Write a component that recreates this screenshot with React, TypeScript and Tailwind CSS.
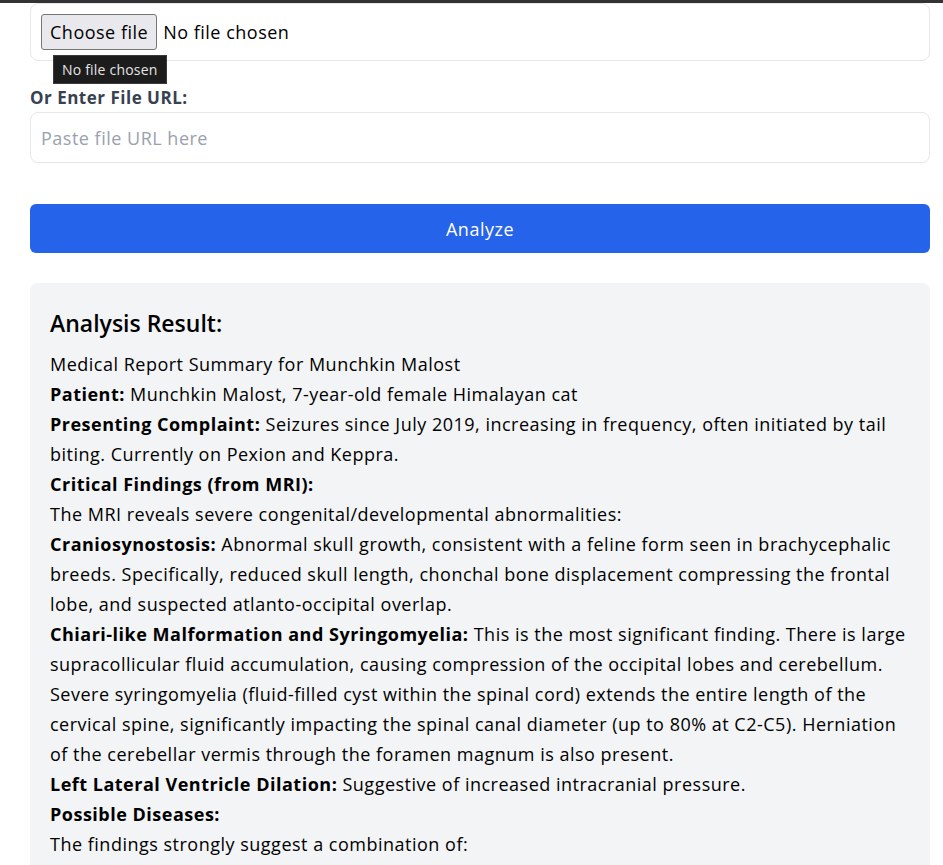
import React from 'react';

// ── Report content ────────────────────────────────────────────────────────────

type Line = { label?: string; text?: string };

const REPORT: Line[] = [
  { text: 'Medical Report Summary for Munchkin Malost' },
  { label: 'Patient:', text: 'Munchkin Malost, 7-year-old female Himalayan cat' },
  {
    label: 'Presenting Complaint:',
    text: 'Seizures since July 2019, increasing in frequency, often initiated by tail biting. Currently on Pexion and Keppra.',
  },
  { label: 'Critical Findings (from MRI):' },
  { text: 'The MRI reveals severe congenital/developmental abnormalities:' },
  {
    label: 'Craniosynostosis:',
    text: 'Abnormal skull growth, consistent with a feline form seen in brachycephalic breeds. Specifically, reduced skull length, chonchal bone displacement compressing the frontal lobe, and suspected atlanto-occipital overlap.',
  },
  {
    label: 'Chiari-like Malformation and Syringomyelia:',
    text: 'This is the most significant finding. There is large supracollicular fluid accumulation, causing compression of the occipital lobes and cerebellum. Severe syringomyelia (fluid-filled cyst within the spinal cord) extends the entire length of the cervical spine, significantly impacting the spinal canal diameter (up to 80% at C2-C5). Herniation of the cerebellar vermis through the foramen magnum is also present.',
  },
  { label: 'Left Lateral Ventricle Dilation:', text: 'Suggestive of increased intracranial pressure.' },
  { label: 'Possible Diseases:' },
  { text: 'The findings strongly suggest a combination of:' },
];

// ── File picker (native look) ─────────────────────────────────────────────────

function FilePicker() {
  return (
    <div className="relative rounded-lg border border-gray-200 p-[10px]">
      <div className="flex items-center gap-[6px]">
        <button className="h-9 rounded-[3px] border border-[#767676] bg-[#e9e9ed] px-2 text-lg text-black">
          Choose file
        </button>
        <span className="text-lg text-black">No file chosen</span>
      </div>
      <div className="absolute left-[22px] top-[51px] z-10 border border-[#3a3a3a] bg-[#1c1c1c] px-2 py-[3px] text-[14px] leading-[21px] tracking-[0.2px] text-[#e4e4e4]">
        No file chosen
      </div>
    </div>
  );
}

// ── Page ──────────────────────────────────────────────────────────────────────

export default function App() {
  return (
    <div className="min-h-screen bg-white font-['Open_Sans',sans-serif] tracking-[0.5px] text-black">
      <div className="h-[3px] bg-[#333]" />
      <div className="px-[30px] pr-[13px]">
        <div className="w-[900px]">
          <FilePicker />

          <label className="mt-[25px] mb-0.5 block text-[17px] font-bold leading-6 text-[#374151]">
            Or Enter File URL:
          </label>
          <input
            type="text"
            placeholder="Paste file URL here"
            className="h-[51px] w-full rounded-lg border border-gray-200 px-[10px] text-lg placeholder:text-gray-400 focus:outline-none"
          />

          <button className="mt-[41px] h-[49px] w-full rounded-md bg-[#2563eb] text-lg text-white">
            Analyze
          </button>

          <div className="mt-[30px] rounded-lg bg-[#f3f4f6] p-5">
            <h2 className="mt-1 mb-[10px] text-[23px] font-semibold leading-8 tracking-normal">
              Analysis Result:
            </h2>
            <div className="text-lg leading-[30px]">
              {REPORT.map((line, i) => (
                <div key={i}>
                  {line.label && <strong className="font-bold">{line.label}</strong>}
                  {line.label && line.text && ' '}
                  {line.text}
                </div>
              ))}
            </div>
          </div>
        </div>
      </div>
    </div>
  );
}
